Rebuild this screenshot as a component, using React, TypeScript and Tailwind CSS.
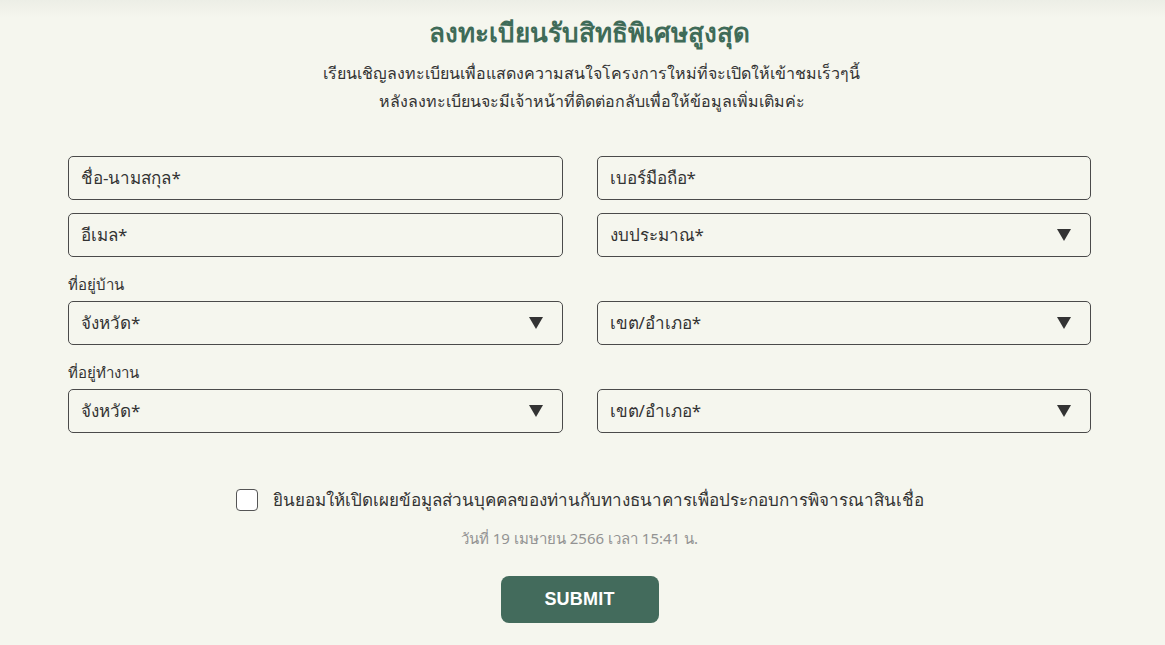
import { useState } from 'react';

const font = { fontFamily: '"Noto Sans", "DejaVu Sans", Tahoma, sans-serif' };

function TextField({ label }: { label: string }) {
  return (
    <div className="h-[44px] rounded-[5px] border border-[#4a4a4a] flex items-center px-3 text-[17px] text-[#333]">
      {label}
    </div>
  );
}

function SelectField({ label }: { label: string }) {
  return (
    <div className="h-[44px] rounded-[5px] border border-[#4a4a4a] flex items-center justify-between pl-3 pr-[19px] text-[17px] text-[#333]">
      <span>{label}</span>
      <svg width="14" height="12" viewBox="0 0 14 12">
        <path d="M0 0 H14 L7 12 Z" fill="#333" />
      </svg>
    </div>
  );
}

export default function App() {
  const [agree, setAgree] = useState(false);

  return (
    <div className="min-h-[645px] bg-[#f5f6ee] relative overflow-hidden" style={font}>
      <div className="h-[18px] bg-gradient-to-b from-[#eceee6] to-[#f5f6ee]" />
      <div className="ml-[68px] w-[1023px]">
        <h1 className="text-center text-[26px] leading-[28px] font-bold text-[#3f6b58] pl-[20px]">
          ลงทะเบียนรับสิทธิพิเศษสูงสุด
        </h1>
        <div className="text-center text-[16px] leading-[28px] text-[#333] mt-[13px] pl-[24px]">
          <p>เรียนเชิญลงทะเบียนเพื่อแสดงความสนใจโครงการใหม่ที่จะเปิดให้เข้าชมเร็วๆนี้</p>
          <p>หลังลงทะเบียนจะมีเจ้าหน้าที่ติดต่อกลับเพื่อให้ข้อมูลเพิ่มเติมค่ะ</p>
        </div>

        <div className="mt-[41px] grid grid-cols-2 gap-x-[34px] gap-y-[13px]">
          <TextField label="ชื่อ-นามสกุล*" />
          <TextField label="เบอร์มือถือ*" />
          <TextField label="อีเมล*" />
          <SelectField label="งบประมาณ*" />
        </div>

        <div className="mt-[16px] text-[15px] leading-[22px] text-[#333]">ที่อยู่บ้าน</div>
        <div className="mt-[6px] grid grid-cols-2 gap-x-[34px]">
          <SelectField label="จังหวัด*" />
          <SelectField label="เขต/อำเภอ*" />
        </div>

        <div className="mt-[16px] text-[15px] leading-[22px] text-[#333]">ที่อยู่ทำงาน</div>
        <div className="mt-[6px] grid grid-cols-2 gap-x-[34px]">
          <SelectField label="จังหวัด*" />
          <SelectField label="เขต/อำเภอ*" />
        </div>

        <label className="mt-[54px] flex items-center justify-center gap-[15px] cursor-pointer">
          <span
            onClick={() => setAgree(!agree)}
            className="w-[22px] h-[22px] rounded-[4px] border border-[#555] bg-white flex items-center justify-center"
          >
            {agree && <span className="text-[14px] text-[#3f6b58]">✓</span>}
          </span>
          <span className="text-[17px] text-[#333]">
            ยินยอมให้เปิดเผยข้อมูลส่วนบุคคลของท่านกับทางธนาคารเพื่อประกอบการพิจารณาสินเชื่อ
          </span>
        </label>

        <p className="mt-[14px] text-center text-[15px] text-[#939393]">วันที่ 19 เมษายน 2566 เวลา 15:41 น.</p>

        <div className="mt-[27px] flex justify-center">
          <button className="w-[158px] h-[47px] rounded-[8px] bg-[#436b5c] text-white text-[18px] font-semibold tracking-[0.2px]" style={{ fontFamily: '"Liberation Sans", Arial, sans-serif' }}>
            SUBMIT
          </button>
        </div>
      </div>
    </div>
  );
}
